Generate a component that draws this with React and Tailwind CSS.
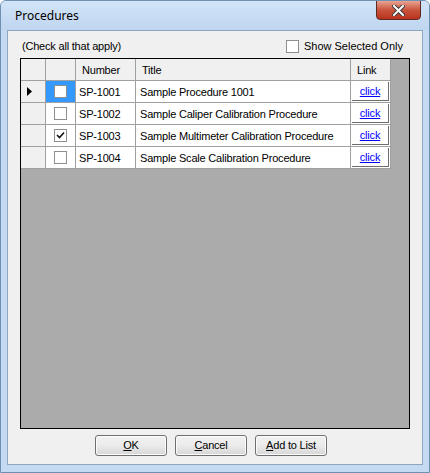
import React, { useState } from 'react';

const rows = [
  { id: 'SP-1001', title: 'Sample Procedure 1001', checked: false, current: true },
  { id: 'SP-1002', title: 'Sample Caliper Calibration Procedure', checked: false },
  { id: 'SP-1003', title: 'Sample Multimeter Calibration Procedure', checked: true },
  { id: 'SP-1004', title: 'Sample Scale Calibration Procedure', checked: false },
];

const CheckBox = ({ checked, onClick }) => (
  <span onClick={onClick} className="w-[13px] h-[13px] border border-[#8e8f8f] bg-white flex items-center justify-center cursor-default">
    {checked && (
      <svg width="9" height="9" viewBox="0 0 9 9">
        <path d="M1 4 L3.5 6.5 L8 1.5" fill="none" stroke="#111" strokeWidth="1.6" />
      </svg>
    )}
  </span>
);

const WinButton = ({ children }) => (
  <button className="w-[72px] h-[21px] rounded-[3px] border border-[#707070] bg-gradient-to-b from-[#f2f2f2] via-[#ebebeb] to-[#d6d6d6] text-[11px] text-black leading-none shadow-[inset_0_0_0_1px_#fcfcfc]">
    {children}
  </button>
);

export default function App() {
  const [data, setData] = useState(rows);
  const [onlySelected, setOnlySelected] = useState(false);

  const toggle = (id) => setData(d => d.map(r => (r.id === id ? { ...r, checked: !r.checked } : r)));
  const visible = onlySelected ? data.filter(r => r.checked) : data;

  return (
    <div className="w-[430px] h-[473px] bg-[#c4daf2] rounded-t-[6px] border border-[#6f8fb3] flex flex-col font-['Liberation_Sans',Arial,sans-serif] tracking-[-0.2px] relative overflow-hidden">
      {/* title bar */}
      <div className="h-[29px] flex items-start bg-gradient-to-b from-[#d2e4f7] to-[#bfd6f0] pl-[14px] pt-[6px]">
        <span className="text-[12px] text-black font-['Noto_Sans',sans-serif] tracking-normal">Procedures</span>
      </div>
      <div className="absolute right-[8px] top-[-1px] w-[45px] h-[20px] rounded-b-[4px] border border-[#5d2a23] bg-gradient-to-b from-[#e8a493] via-[#c9533b] to-[#b8331c] flex items-center justify-center">
        <svg width="13" height="11" viewBox="0 0 13 11">
          <path d="M2 1 L11 10 M11 1 L2 10" stroke="#3a3a3a" strokeWidth="4" strokeLinecap="square" />
          <path d="M2 1 L11 10 M11 1 L2 10" stroke="#ffffff" strokeWidth="2" strokeLinecap="square" />
        </svg>
      </div>

      {/* client area */}
      <div className="mx-[6px] h-[435px] border border-[#8fa6c2] bg-[#f0f0f0] flex flex-col px-[12px]">
        <div className="h-[27px] flex items-center justify-between pt-[3px] text-[11px] text-black">
          <span className="ml-[2px]">(Check all that apply)</span>
          <label className="flex items-center gap-[5px] mr-[7px] tracking-normal" onClick={() => setOnlySelected(v => !v)}>
            <span className="w-[13px] h-[13px] border border-[#8e8f8f] bg-white flex items-center justify-center">
              {onlySelected && (
                <svg width="9" height="9" viewBox="0 0 9 9">
                  <path d="M1 4 L3.5 6.5 L8 1.5" fill="none" stroke="#111" strokeWidth="1.6" />
                </svg>
              )}
            </span>
            <span>Show Selected Only</span>
          </label>
        </div>

        {/* data grid */}
        <div className="h-[371px] border border-black bg-[#ababab] text-[11px] text-black">
          <div className="flex h-[22px]">
            <div className="w-[25px] bg-[#f0f0f0] border-r border-b border-[#a0a0a0]" />
            <div className="w-[30px] bg-[#f0f0f0] border-r border-b border-[#a0a0a0]" />
            <div className="w-[60px] bg-[#f0f0f0] border-r border-b border-[#a0a0a0] flex items-center pl-[6px] pt-[2px]">Number</div>
            <div className="w-[215px] bg-[#f0f0f0] border-r border-b border-[#a0a0a0] flex items-center pl-[6px] pt-[2px]">Title</div>
            <div className="w-[40px] bg-[#f0f0f0] border-r border-b border-[#a0a0a0] flex items-center pl-[6px] pt-[2px]">Link</div>
          </div>
          {visible.map(r => (
            <div key={r.id} className="flex h-[22px]">
              <div className="w-[25px] bg-[#f0f0f0] border-r border-b border-[#a0a0a0] flex items-center pl-[6px]">
                {r.current && (
                  <svg width="5" height="9" viewBox="0 0 5 9"><path d="M0 0 L5 4.5 L0 9 Z" fill="#000" /></svg>
                )}
              </div>
              <div className={`w-[30px] border-r border-b border-[#a0a0a0] flex items-center justify-center ${r.current ? 'bg-[#3399ff]' : 'bg-white'}`}>
                <CheckBox checked={r.checked} onClick={() => toggle(r.id)} />
              </div>
              <div className="w-[60px] bg-white border-r border-b border-[#a0a0a0] flex items-center pl-[3px] pt-[1px]">{r.id}</div>
              <div className="w-[215px] bg-white border-r border-b border-[#a0a0a0] flex items-center pl-[4px] pt-[1px] whitespace-nowrap overflow-hidden">{r.title}</div>
              <div className="w-[40px] bg-white border-r border-b border-[#a0a0a0] p-[1px] flex">
                <a href="#" className="flex-1 flex items-center justify-center pt-[1px] bg-white border-r border-b border-[#6e6e6e] text-[#0000ff] underline">click</a>
              </div>
            </div>
          ))}
        </div>

        <div className="flex gap-[8px] mt-[6px] ml-[75px]">
          <WinButton><u>O</u>K</WinButton>
          <WinButton><u>C</u>ancel</WinButton>
          <WinButton><u>A</u>dd to List</WinButton>
        </div>
      </div>
    </div>
  );
}
